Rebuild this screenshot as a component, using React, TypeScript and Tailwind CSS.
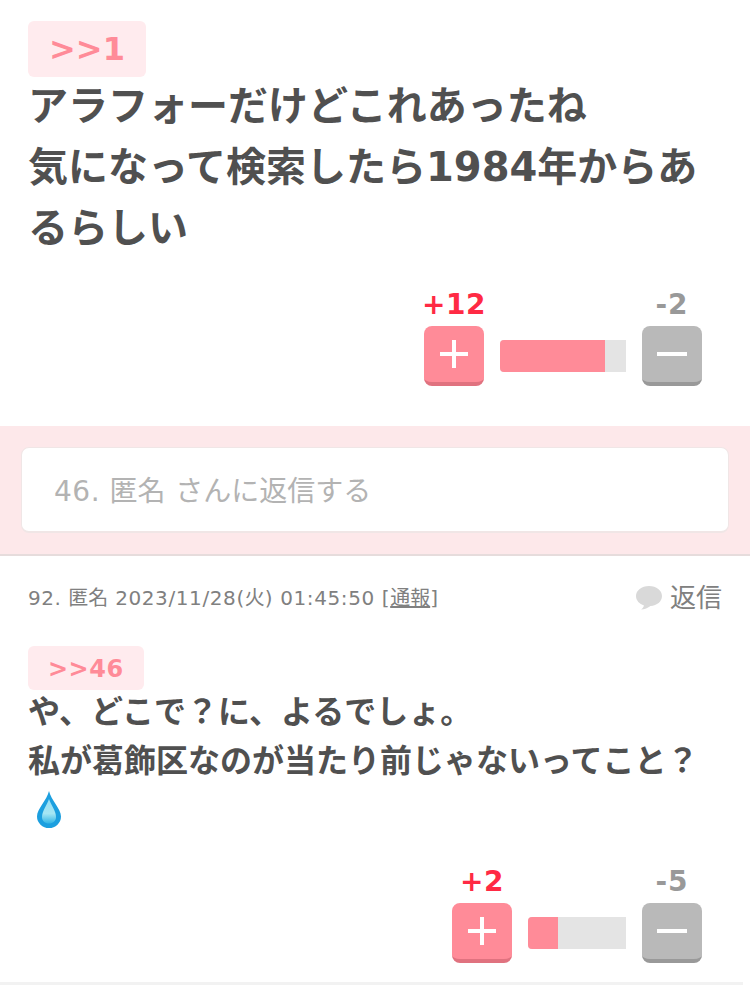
const FONT = 'font-["DejaVu_Sans","Noto_Sans_CJK_JP",sans-serif]';

function Drop() {
  return (
    <svg width="24" height="37" viewBox="0 0 24 37" aria-hidden="true">
      <defs>
        <linearGradient id="drop" x1="0" y1="0" x2="0" y2="1">
          <stop offset="0" stopColor="#9adff5" />
          <stop offset="0.6" stopColor="#a5e6f3" />
          <stop offset="1" stopColor="#2fb4e6" />
        </linearGradient>
      </defs>
      <path d="M12 0C10 9 0 18 0 25.500a12 11.500 0 0 0 24 0C24 18 14 9 12 0Z" fill="#1c9fdf" />
      <path d="M12 8C10 14 5 20 5 26c0 4 3 6.500 7 6.500s7-2.500 7-6.500C19 20 14 14 12 8Z" fill="url(#drop)" />
    </svg>
  );
}

function PlusIcon() {
  return (
    <svg width="30" height="30" viewBox="0 0 30 30" aria-hidden="true">
      <path d="M15 1v28M1 15h28" stroke="#fff" strokeWidth="4" />
    </svg>
  );
}

function MinusIcon() {
  return (
    <svg width="30" height="30" viewBox="0 0 30 30" aria-hidden="true">
      <path d="M0 15h30" stroke="#fff" strokeWidth="4" />
    </svg>
  );
}

function Votes({ plus, minus, barClass, fillClass }: { plus: string; minus: string; barClass: string; fillClass: string }) {
  return (
    <div className="flex justify-end pr-[48px]">
      <div className="flex w-[60px] flex-col items-center">
        <div className="h-[44px] text-[28px] leading-[46px] font-bold tracking-[0.5px] text-[#ff2a44] whitespace-nowrap">{plus}</div>
        <button className="flex h-[60px] w-[60px] items-center justify-center rounded-[8px] border-b-[4px] border-[#e0727f] bg-[#ff8b98]">
          <PlusIcon />
        </button>
      </div>
      <div className={`mx-[16px] mt-[58px] h-[32px] overflow-hidden rounded-l-[4px] bg-[#e4e4e4] ${barClass}`}>
        <div className={`h-full bg-[#ff8b98] ${fillClass}`} />
      </div>
      <div className="flex w-[60px] flex-col items-center">
        <div className="h-[44px] text-[28px] leading-[46px] font-bold tracking-[1px] text-[#999999] whitespace-nowrap">{minus}</div>
        <button className="flex h-[60px] w-[60px] items-center justify-center rounded-[8px] border-b-[4px] border-[#999999] bg-[#b9b9b9]">
          <MinusIcon />
        </button>
      </div>
    </div>
  );
}

export default function App() {
  return (
    <div className={`h-[1001px] overflow-hidden bg-white text-[#505050] ${FONT}`}>
      {/* first comment */}
      <section className="px-[28px] pt-[21px]">
        <div className="inline-block h-[56px] rounded-[6px] bg-[#ffebee] pl-[21px] pr-[21px] text-[32px] leading-[56px] font-bold text-[#ff8b98]">
          &gt;&gt;1
        </div>
        <p className="-mt-[1px] text-[40px] leading-[61px] font-bold">
          アラフォーだけどこれあったね
          <br />
          気になって検索したら1984年からあるらしい
        </p>
      </section>
      <div className="mt-[23px]">
        <Votes plus="+12" minus="-2" barClass="w-[126px]" fillClass="w-[105px]" />
      </div>

      {/* reply box */}
      <div className="mt-[40px] border-b-[2px] border-[#e6dcdc] bg-[#fde8ea] px-[21px] pt-[21px] pb-[21px]">
        <div className="flex h-[86px] items-center rounded-[8px] border border-[#f0e6e6] border-b-[2px] bg-white pt-[4px] pl-[32px] text-[28px] text-[#b3b3b3]">
          <span className="whitespace-pre">
            <span className="tracking-[0.5px]">46. </span>匿名<span className="tracking-[1px]"> </span>さんに返信する
          </span>
        </div>
      </div>

      {/* second comment */}
      <section className="pl-[28px] pr-[28px]">
        <div className="flex h-[84px] items-center justify-between">
          <div className="text-[20px] text-[#808080]">
            <span className="tracking-[0.5px]">92. </span>匿名
            <span className="tracking-[0.6px]"> 2023/11/28(</span>火<span className="tracking-[0.6px]">) 01:45:50 [</span>
            <span className="underline">通報</span>]
          </div>
          <div className="flex items-center gap-[7px] text-[26px] text-[#808080]">
            <svg width="28" height="26" viewBox="0 0 28 26" aria-hidden="true">
              <path d="M14 1C6.500 1 1 5.500 1 11c0 4.500 3.500 8 8 9.500-.5 1.800-1.500 3-3 4 3.500-.2 7-1.500 9.500-3.500C22 20.500 27 16.500 27 11 27 5.500 21.500 1 14 1Z" fill="#d9d9d9" />
            </svg>
            <span>返信</span>
          </div>
        </div>
        <div className="mt-[6px] inline-block h-[44px] rounded-[6px] bg-[#ffebee] pl-[20px] pr-[20px] text-[24px] leading-[46px] font-bold tracking-[0.5px] text-[#ff8b98]">
          &gt;&gt;46
        </div>
        <p className="-mt-[2px] text-[32px] leading-[49px] font-bold">
          や、どこで？に、よるでしょ。
          <br />
          私が葛飾区なのが当たり前じゃないってこと？
        </p>
        <div className="mt-[5px] h-[38px] pl-[9px]">
          <Drop />
        </div>
      </section>
      <div className="mt-[30px]">
        <Votes plus="+2" minus="-5" barClass="w-[98px]" fillClass="w-[30px]" />
      </div>
      <div className="mt-[19px] h-[3px] w-[743px] bg-[#f2f2f2]" />
    </div>
  );
}
